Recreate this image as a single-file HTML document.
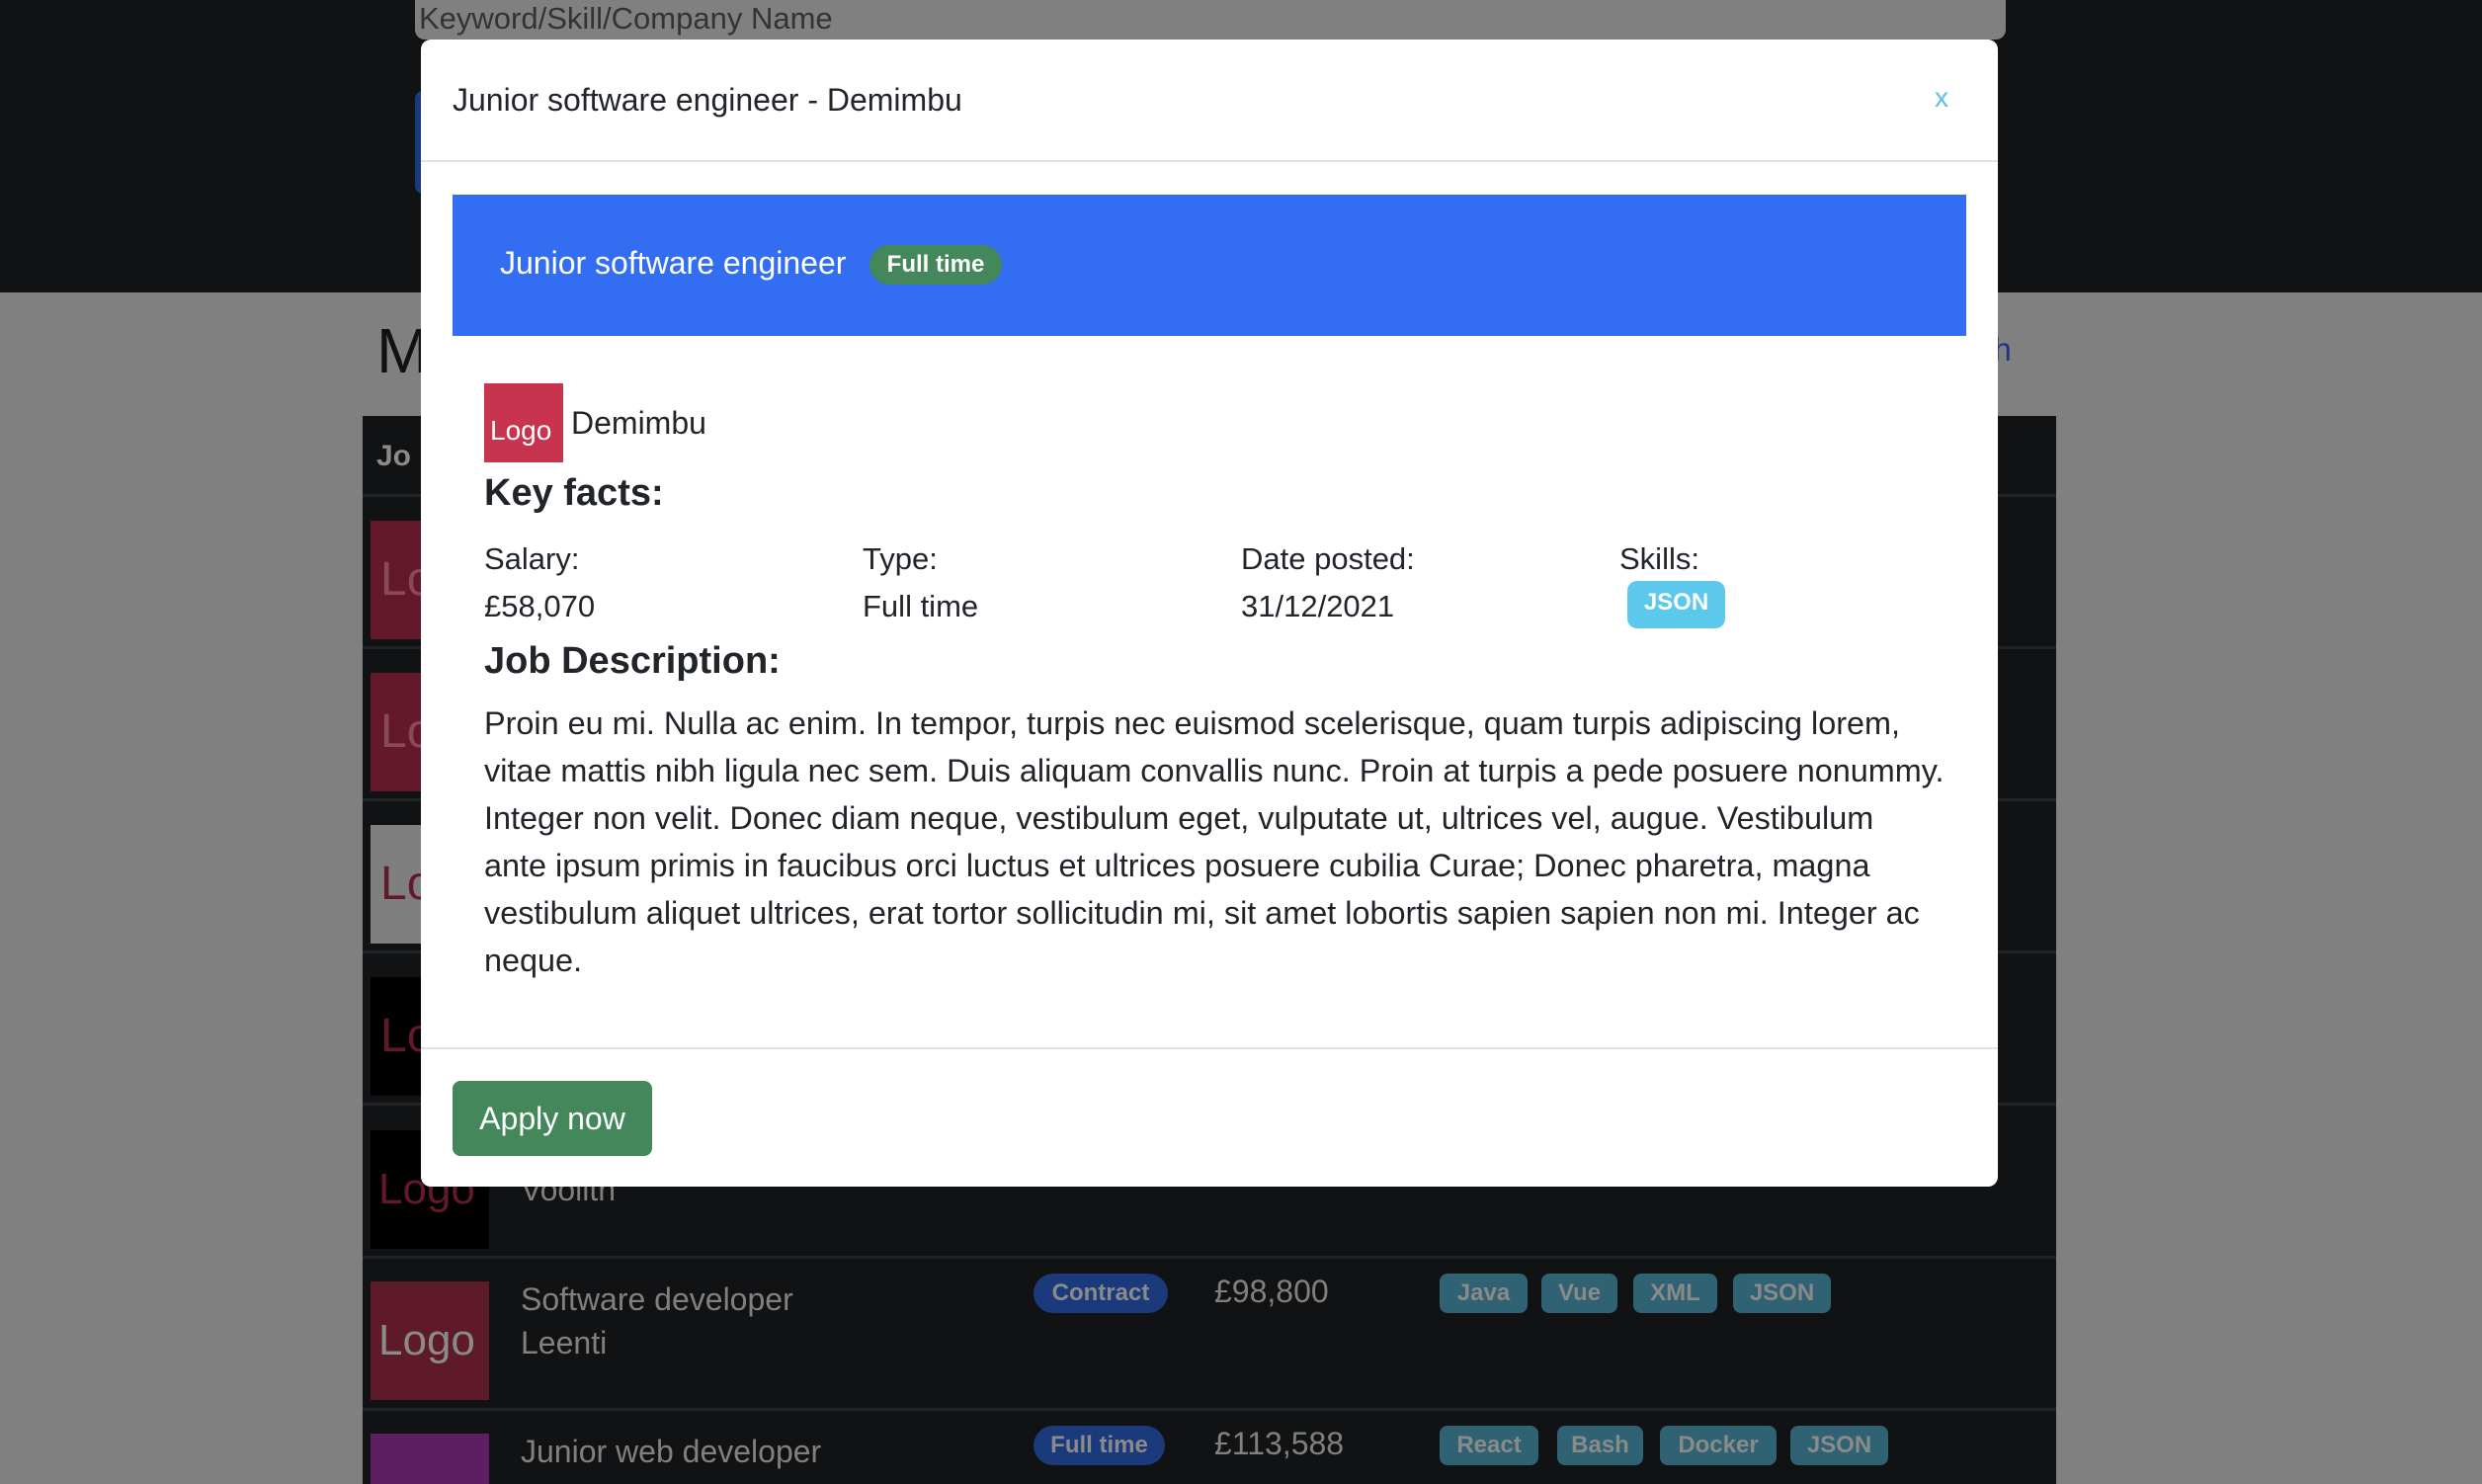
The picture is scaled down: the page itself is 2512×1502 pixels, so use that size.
<!DOCTYPE html>
<html><head><meta charset="utf-8"><style>
*{margin:0;padding:0;box-sizing:border-box}
html,body{width:2512px;height:1502px;overflow:hidden}
body{background:#808080;font-family:"Liberation Sans",sans-serif}
#w{position:relative;width:2512px;height:1502px;overflow:hidden}
.a{position:absolute;white-space:nowrap}
.badge{position:absolute;border-radius:20px;font-weight:bold;font-size:24px;text-align:center;line-height:40px}
.logo{position:absolute;width:120px;height:120px;overflow:hidden;font-size:48px;line-height:120px;padding-left:10px;font-weight:300}
.row{position:absolute;left:367px;width:1714px;height:3px;background:#222326}
</style></head><body><div id="w">
<div class="a" style="left:0;top:0;width:2512px;height:296px;background:#111214"></div>
<div class="a" style="left:420px;top:-10px;width:1610px;height:50px;background:#808080;border-radius:0 0 10px 10px;font-size:31px;color:#333;padding-left:4px;line-height:38px;padding-top:10px">Keyword/Skill/Company Name</div>
<div class="a" style="left:420px;top:92px;width:20px;height:104px;background:#1a3a80;border-radius:8px 0 0 8px"></div>
<div class="a" style="left:381px;top:318px;font-size:64px;color:#111">M</div>
<div class="a" style="left:1990px;top:335px;font-size:33px;color:#1a3a80">rch</div>
<div class="a" style="left:367px;top:421px;width:1714px;height:1081px;background:#111214"></div>
<div class="a" style="left:381px;top:445px;font-size:30px;color:#8a8a8a;font-weight:bold">Jo</div>
<div class="row" style="top:500px"></div><div class="row" style="top:654px"></div><div class="row" style="top:808px"></div><div class="row" style="top:962px"></div><div class="row" style="top:1116px"></div><div class="row" style="top:1271px"></div><div class="row" style="top:1425px"></div>
<div class="logo" style="left:375px;top:527px;background:#64192a;color:#8a4a55">Lo</div>
<div class="logo" style="left:375px;top:681px;background:#64192a;color:#8a4a55">Lo</div>
<div class="logo" style="left:375px;top:835px;background:#7f7f7f;color:#64192a">Lo</div>
<div class="logo" style="left:375px;top:989px;background:#000;color:#64192a">Lo</div>
<div class="logo" style="left:375px;top:1144px;background:#000;color:#64192a;font-size:44px;padding-left:8px">Logo</div>
<div class="a" style="left:527px;top:1186px;font-size:32px;color:#7f7f7f">Voolith</div>
<div class="logo" style="left:375px;top:1297px;background:#5e1a28;color:#8a8a8a;font-size:44px;padding-left:8px">Logo</div>
<div class="a" style="left:527px;top:1297px;font-size:32px;color:#808080">Software developer</div>
<div class="a" style="left:527px;top:1341px;font-size:32px;color:#808080">Leenti</div>
<div class="badge" style="left:1046px;top:1289px;width:136px;background:#1b3a7c;color:#8a8a8a">Contract</div>
<div class="a" style="left:1229px;top:1289px;font-size:32px;color:#808080">£98,800</div>
<div class="badge" style="left:1457px;top:1289px;width:89px;background:#2f6272;color:#8a8a8a;border-radius:8px">Java</div>
<div class="badge" style="left:1560px;top:1289px;width:77px;background:#2f6272;color:#8a8a8a;border-radius:8px">Vue</div>
<div class="badge" style="left:1653px;top:1289px;width:85px;background:#2f6272;color:#8a8a8a;border-radius:8px">XML</div>
<div class="badge" style="left:1754px;top:1289px;width:99px;background:#2f6272;color:#8a8a8a;border-radius:8px">JSON</div>
<div class="logo" style="left:375px;top:1451px;height:51px;background:#5e1f62"></div>
<div class="a" style="left:527px;top:1451px;font-size:32px;color:#808080">Junior web developer</div>
<div class="badge" style="left:1046px;top:1443px;width:133px;background:#1b3a7c;color:#8a8a8a">Full time</div>
<div class="a" style="left:1229px;top:1443px;font-size:32px;color:#808080">£113,588</div>
<div class="badge" style="left:1457px;top:1443px;width:100px;background:#2f6272;color:#8a8a8a;border-radius:8px">React</div>
<div class="badge" style="left:1576px;top:1443px;width:87px;background:#2f6272;color:#8a8a8a;border-radius:8px">Bash</div>
<div class="badge" style="left:1680px;top:1443px;width:118px;background:#2f6272;color:#8a8a8a;border-radius:8px">Docker</div>
<div class="badge" style="left:1812px;top:1443px;width:99px;background:#2f6272;color:#8a8a8a;border-radius:8px">JSON</div>

<div class="a" style="left:426px;top:40px;width:1596px;height:1161px;background:#fff;border-radius:10px">
  <div class="a" style="left:32px;top:43px;font-size:32px;color:#212529">Junior software engineer - Demimbu</div>
  <div class="a" style="left:1532px;top:43px;font-size:28px;color:#5bc0de">x</div>
  <div class="a" style="left:0;top:122px;width:1596px;height:2px;background:#dee2e6"></div>
  <div class="a" style="left:32px;top:157px;width:1532px;height:143px;background:#336ef2">
    <div class="a" style="left:48px;top:51px;font-size:32px;color:#fff">Junior software engineer</div>
    <div class="badge" style="left:422px;top:51px;width:134px;background:#43875a;color:#fff">Full time</div>
  </div>
  <div class="a" style="left:64px;top:348px;width:80px;height:80px;background:#c8334e;color:#fff;font-size:28px;font-weight:300;line-height:96px;padding-left:6px;overflow:hidden">Logo</div>
  <div class="a" style="left:152px;top:370px;font-size:32px;color:#212529">Demimbu</div>
  <div class="a" style="left:64px;top:438px;font-size:38px;color:#212529;font-weight:bold">Key facts:</div>
  <div class="a" style="left:64px;top:508px;font-size:31px;color:#212529">Salary:</div>
  <div class="a" style="left:447px;top:508px;font-size:31px;color:#212529">Type:</div>
  <div class="a" style="left:830px;top:508px;font-size:31px;color:#212529">Date posted:</div>
  <div class="a" style="left:1213px;top:508px;font-size:31px;color:#212529">Skills:</div>
  <div class="a" style="left:64px;top:556px;font-size:31px;color:#212529">£58,070</div>
  <div class="a" style="left:447px;top:556px;font-size:31px;color:#212529">Full time</div>
  <div class="a" style="left:830px;top:556px;font-size:31px;color:#212529">31/12/2021</div>
  <div class="badge" style="left:1221px;top:548px;width:99px;height:48px;line-height:44px;background:#5bc8ec;color:#fff;border-radius:10px">JSON</div>
  <div class="a" style="left:64px;top:608px;font-size:38px;color:#212529;font-weight:bold">Job Description:</div>
  <div class="a" style="left:64px;top:668px;font-size:32.4px;line-height:48px;color:#212529">Proin eu mi. Nulla ac enim. In tempor, turpis nec euismod scelerisque, quam turpis adipiscing lorem,<br>vitae mattis nibh ligula nec sem. Duis aliquam convallis nunc. Proin at turpis a pede posuere nonummy.<br>Integer non velit. Donec diam neque, vestibulum eget, vulputate ut, ultrices vel, augue. Vestibulum<br>ante ipsum primis in faucibus orci luctus et ultrices posuere cubilia Curae; Donec pharetra, magna<br>vestibulum aliquet ultrices, erat tortor sollicitudin mi, sit amet lobortis sapien sapien non mi. Integer ac<br>neque.</div>
  <div class="a" style="left:0;top:1020px;width:1596px;height:2px;background:#dee2e6"></div>
  <div class="a" style="left:32px;top:1054px;width:202px;height:76px;background:#43875a;border-radius:8px;color:#fff;font-size:32px;text-align:center;line-height:76px">Apply now</div>
</div>
</div></body></html>
